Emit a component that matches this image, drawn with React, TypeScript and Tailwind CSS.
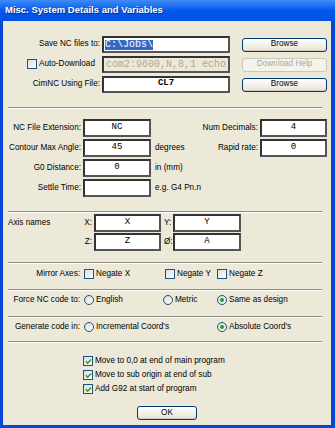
const sans = "font-['Liberation_Sans',Arial,sans-serif]"
const mono = "font-['Liberation_Mono','Courier_New',monospace]"

function Field({
  className = '',
  disabled,
  center,
  children,
}: {
  className?: string
  disabled?: boolean
  center?: boolean
  children?: React.ReactNode
}) {
  return (
    <div
      className={`flex h-full shrink-0 items-center border-2 border-t-[#333333] border-l-[#333333] border-r-[#555555] border-b-[#555555] ${mono} leading-none ${
        disabled ? 'bg-[#ece9d8] text-[#aca899]' : 'bg-white text-black'
      } ${center ? 'justify-center pb-[2px] text-[9px]' : 'pl-[1px] text-[10px]'} ${className}`}
    >
      {children}
    </div>
  )
}

function Btn({ className = '', disabled, children }: { className?: string; disabled?: boolean; children: React.ReactNode }) {
  return (
    <div
      className={`flex h-[14px] shrink-0 items-center justify-center rounded-[3px] border leading-none ${
        disabled
          ? 'border-[#c9c7ba] bg-[#f5f4ea] text-[#aca899]'
          : 'border-[#003c74] bg-gradient-to-b from-white to-[#e6e3d8] text-black shadow-[inset_0_-1px_0_#d0cbbd]'
      } ${className}`}
    >
      {children}
    </div>
  )
}

function Check({ checked }: { checked?: boolean }) {
  return (
    <span className="flex h-[10px] w-[10px] shrink-0 items-center justify-center border border-[#1c5180] bg-gradient-to-br from-[#dcdcd7] to-white">
      {checked ? (
        <svg viewBox="0 0 8 8" className="h-[7px] w-[7px]">
          <path d="M1 3.8 L3 5.9 L7 1.6" stroke="#21a121" strokeWidth="1.7" fill="none" />
        </svg>
      ) : null}
    </span>
  )
}

function Radio({ checked }: { checked?: boolean }) {
  return (
    <span className="flex h-[10px] w-[10px] shrink-0 items-center justify-center rounded-full border border-[#1c5180] bg-gradient-to-br from-[#dcdcd7] to-white">
      {checked ? <span className="h-[4px] w-[4px] rounded-full bg-[#21a121]" /> : null}
    </span>
  )
}

function Sep({ className = '' }: { className?: string }) {
  return <div className={`ml-[5px] mr-[9px] shrink-0 border-t border-b border-t-[#8f8c80] border-b-white ${className}`} />
}

export default function App() {
  return (
    <div className={`flex h-[428px] w-[335px] flex-col bg-[#0846d8] ${sans} text-[8.2px] text-black`}>
      <div className="flex h-[21px] shrink-0 items-center bg-gradient-to-b from-[#3d8cf5] via-[#0058ee] to-[#0052e0] pl-[5px] text-[9.5px] font-bold text-white [text-shadow:1px_1px_0_#0b2a8a]">
        Misc. System Details and Variables
      </div>

      <div className="mb-[3px] ml-[3px] mr-[4px] flex flex-1 flex-col bg-[#ece9d8]">
        {/* file paths */}
        <div className="flex flex-col gap-[3px] pt-[15px]">
          <div className="flex h-[17px] items-center">
            <div className="w-[97px] text-right">Save NC files to:</div>
            <Field className="ml-[2px] w-[128px]">
              <span className="bg-[#316ac5] text-white">C:\Jobs\</span>
            </Field>
            <Btn className="ml-[12px] w-[85px]">Browse</Btn>
          </div>
          <div className="flex h-[17px] items-center">
            <div className="flex w-[97px] items-center gap-[2px] pl-[24px]">
              <Check />
              <span>Auto-Download</span>
            </div>
            <Field disabled className="ml-[2px] w-[128px] pl-[2px]">
              com2:9600,N,8,1 echo
            </Field>
            <Btn disabled className="ml-[12px] w-[85px]">
              Download Help
            </Btn>
          </div>
          <div className="flex h-[17px] items-center">
            <div className="w-[97px] text-right">CimNC Using File:</div>
            <Field center className="ml-[2px] w-[128px] font-bold">
              CL7
            </Field>
            <Btn className="ml-[12px] w-[85px]">Browse</Btn>
          </div>
        </div>

        <Sep className="mt-[14px]" />

        {/* numeric settings */}
        <div className="mt-[10px] flex flex-col gap-[2px]">
          <div className="flex h-[18px] items-center">
            <div className="w-[78px] text-right">NC File Extension:</div>
            <Field center className="ml-[2px] w-[68px]">NC</Field>
            <div className="ml-auto">Num Decimals:</div>
            <Field center className="ml-[2px] mr-[4px] w-[67px]">4</Field>
          </div>
          <div className="flex h-[18px] items-center">
            <div className="w-[78px] text-right">Contour Max Angle:</div>
            <Field center className="ml-[2px] w-[68px]">45</Field>
            <span className="ml-[4px]">degrees</span>
            <div className="ml-auto">Rapid rate:</div>
            <Field center className="ml-[2px] mr-[4px] w-[67px]">0</Field>
          </div>
          <div className="flex h-[18px] items-center">
            <div className="w-[78px] text-right">G0 Distance:</div>
            <Field center className="ml-[2px] w-[68px]">0</Field>
            <span className="ml-[4px]">in (mm)</span>
          </div>
          <div className="flex h-[18px] items-center">
            <div className="w-[78px] text-right">Settle Time:</div>
            <Field center className="ml-[2px] w-[68px]" />
            <span className="ml-[4px]">e.g. G4 Pn.n</span>
          </div>
        </div>

        <Sep className="mt-[14px]" />

        {/* axis names */}
        <div className="mt-[1px] flex flex-col gap-[1px]">
          <div className="flex h-[18px] items-center">
            <div className="w-[80px] pl-[5px]">Axis names</div>
            <div className="w-[9px] text-right">X:</div>
            <Field center className="ml-[2px] w-[67px]">X</Field>
            <div className="ml-[3px] w-[9px]">Y:</div>
            <Field center className="w-[68px]">Y</Field>
          </div>
          <div className="flex h-[18px] items-center">
            <div className="w-[80px]" />
            <div className="w-[9px] text-right">Z:</div>
            <Field center className="ml-[2px] w-[67px]">Z</Field>
            <div className="ml-[3px] w-[9px]">Ø:</div>
            <Field center className="w-[68px]">A</Field>
          </div>
        </div>

        <Sep className="mt-[11px]" />

        <div className="mt-[4px] flex h-[12px] items-center">
          <div className="w-[77px] text-right">Mirror Axes:</div>
          <div className="ml-[4px] flex w-[81px] items-center gap-[2px]">
            <Check />
            <span>Negate X</span>
          </div>
          <div className="flex w-[52px] items-center gap-[2px]">
            <Check />
            <span>Negate Y</span>
          </div>
          <div className="flex items-center gap-[2px]">
            <Check />
            <span>Negate Z</span>
          </div>
        </div>

        <Sep className="mt-[9px]" />

        <div className="mt-[3px] flex h-[12px] items-center">
          <div className="w-[77px] text-right">Force NC code to:</div>
          <div className="ml-[4px] flex w-[79px] items-center gap-[2px]">
            <Radio />
            <span>English</span>
          </div>
          <div className="flex w-[54px] items-center gap-[2px]">
            <Radio />
            <span>Metric</span>
          </div>
          <div className="flex items-center gap-[2px]">
            <Radio checked />
            <span>Same as design</span>
          </div>
        </div>

        <Sep className="mt-[10px]" />

        <div className="mt-[3px] flex h-[12px] items-center">
          <div className="w-[77px] text-right">Generate code in:</div>
          <div className="ml-[4px] flex w-[133px] items-center gap-[2px]">
            <Radio />
            <span>Incremental Coord's</span>
          </div>
          <div className="flex items-center gap-[2px]">
            <Radio checked />
            <span>Absolute Coord's</span>
          </div>
        </div>

        <Sep className="mt-[8px]" />

        <div className="mt-[11px] flex flex-col pl-[80px]">
          {['Move to 0,0 at end of main program', 'Move to sub origin at end of sub', 'Add G92 at start of program'].map(
            (t) => (
              <div key={t} className="flex h-[14px] items-center gap-[2px]">
                <Check checked />
                <span>{t}</span>
              </div>
            ),
          )}
        </div>

        <div className="mt-[10px] flex justify-center">
          <Btn className="w-[60px]">OK</Btn>
        </div>
      </div>
    </div>
  )
}
